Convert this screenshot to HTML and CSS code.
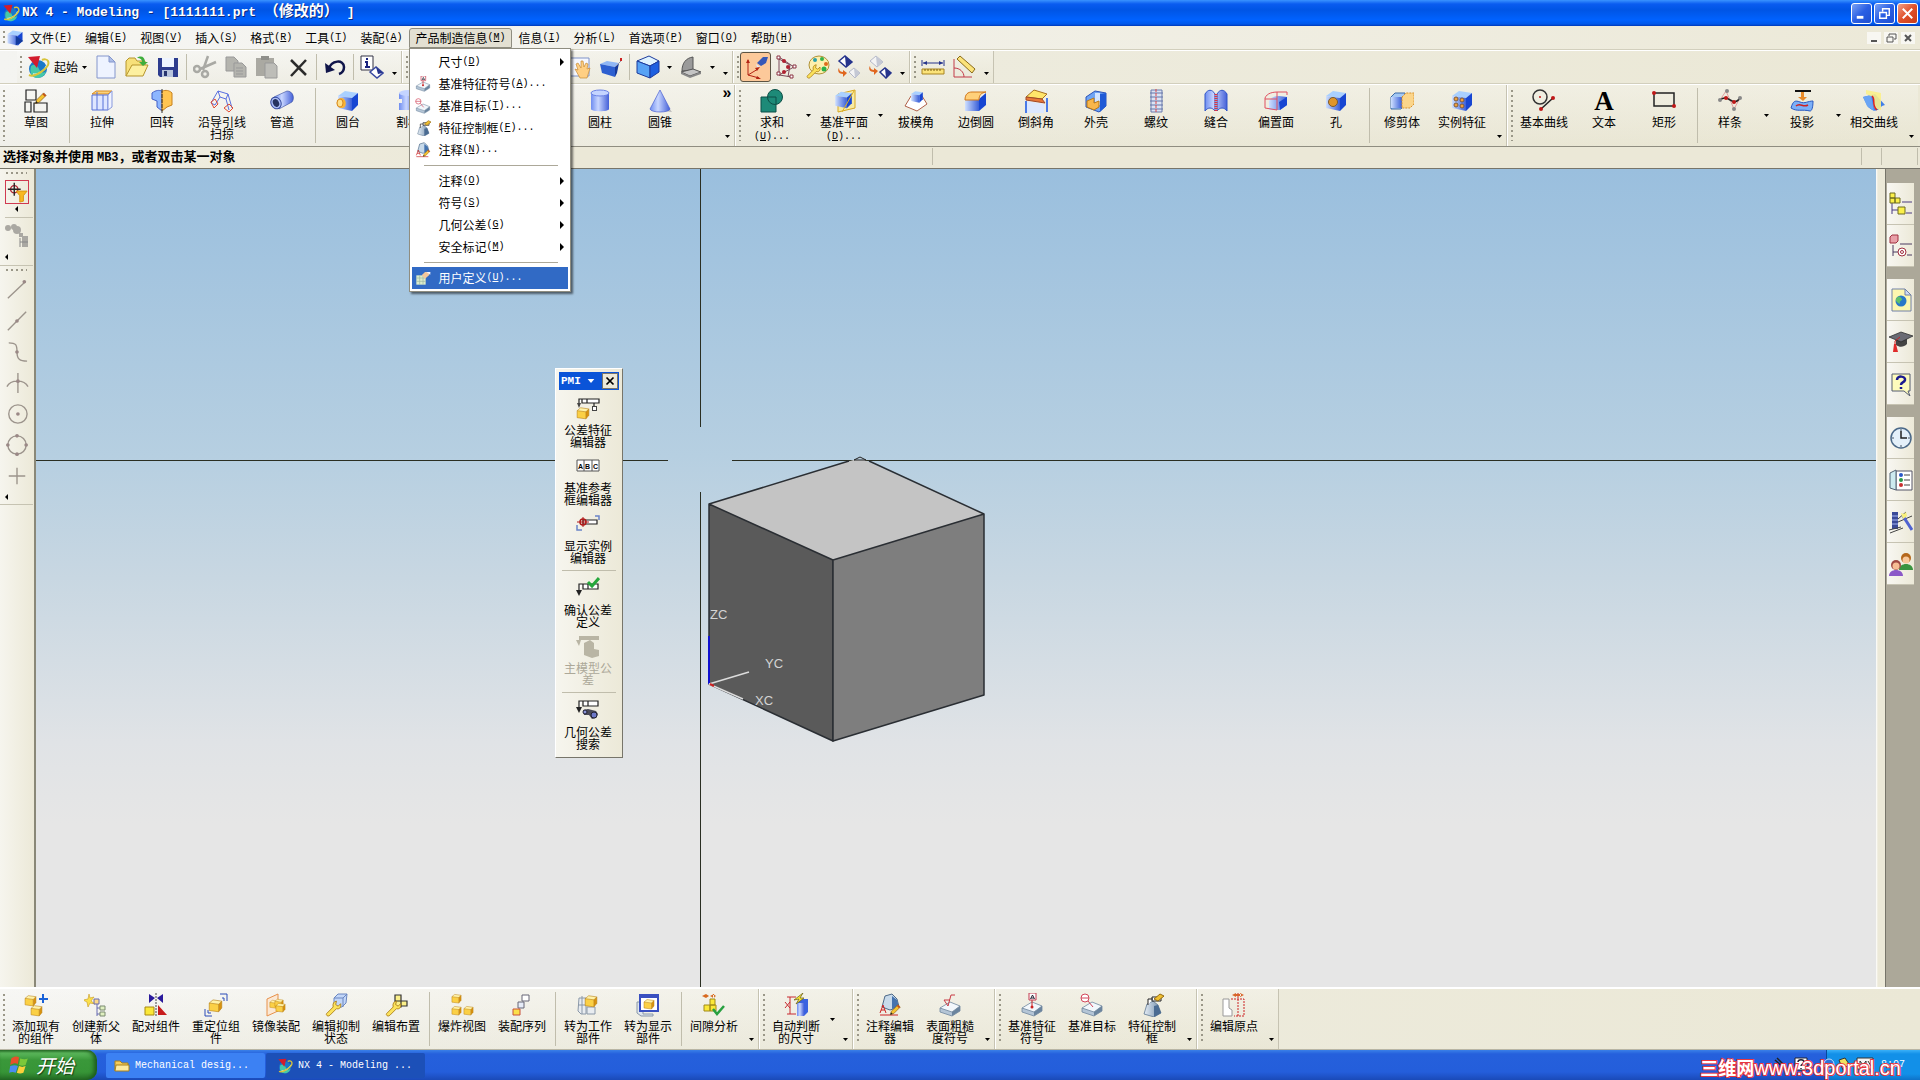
FILE: index.html
```
<!DOCTYPE html>
<html lang="zh-CN">
<head>
	<meta charset="utf-8">
	<title>NX 4 - Modeling</title>
	<link rel="stylesheet" href="styles.css">
</head>
<body>
<svg class="defs" width="0" height="0" aria-hidden="true">
	<defs>
		<linearGradient id="gb"><stop offset="0" stop-color="#cfe0ff"/><stop offset="1" stop-color="#3a5fd8"/></linearGradient>
		<linearGradient id="gc"><stop offset="0" stop-color="#6f8df0"/><stop offset=".4" stop-color="#c8d6ff"/><stop offset="1" stop-color="#4460d8"/></linearGradient>
		<linearGradient id="gg"><stop offset="0" stop-color="#e6eef6"/><stop offset="1" stop-color="#6d8aa8"/></linearGradient>
	</defs>
	<symbol id="cube-b" viewBox="0 0 24 24"><path d="M2 7l7-5 13 2-6 5z" fill="#a9d0ff"/><path d="M2 7l14 2v13L2 19z" fill="url(#gb)"/><path d="M16 9l6-5v12l-6 6z" fill="#1746d2"/></symbol>
	<symbol id="cube-y" viewBox="0 0 24 24"><path d="M2 8l6-5 14 2-5 5z" fill="#fff2a8"/><path d="M2 8l15 2v12L2 20z" fill="#fbd045"/><path d="M17 10l5-5v11l-5 6z" fill="#d8920f"/><path d="M2 8l6-5 14 2v11l-5 6L2 20zM2 8l15 2 5-5M17 10v12" fill="none" stroke="#b98012"/></symbol>
	<symbol id="slab" viewBox="0 0 24 24"><path d="M2 15l10-6 10 4-8 6z" fill="#f2f7fb"/><path d="M2 15l12 4v4L2 19z" fill="#b4c5d6"/><path d="M14 19l8-6v5l-8 5z" fill="#6a849e"/><path d="M2 15l10-6 10 4v5l-8 5-12-4zM2 15l12 4 8-6" fill="none" stroke="#6f879e" stroke-width=".8"/></symbol>
	<symbol id="weight" viewBox="0 0 24 24"><path d="M4 21L7 11l6-3 5 4 3 8-7 4z" fill="url(#gg)" stroke="#4d6a88" stroke-width=".7"/><path d="M14 13l4-1 3 8-7 4z" fill="#4a6b92"/></symbol>
	<symbol id="wrench" viewBox="0 0 24 24"><path d="M3 20l8-8c-1-4 1-7 4-7l-1 4 3 2 3-3c1 5-2 7-5 6l-8 8c-2 2-5 0-4-2z" fill="#fbe25c" stroke="#a87a10"/></symbol>
	<symbol id="pencil" viewBox="0 0 24 24"><path d="M4 20l2-6L17 3l4 4L10 18z" fill="#f5c431" stroke="#7a4d10"/><path d="M15 5l2-2 4 4-2 2z" fill="#c4501c"/><path d="M4 20l1-4 3 3z" fill="#222"/></symbol>
	<symbol id="nx" viewBox="0 0 24 24"><circle cx="12" cy="14" r="9" fill="#1a78c8"/><path d="M5 11c4-3 7 0 8 3s4 5 7 2c-1 5-5 7-9 7-5 0-8-5-6-12z" fill="#46c8a8"/><path d="M7 19c6 1 12-4 14-9" fill="none" stroke="#d6f4ff" stroke-width="1.500"/><path d="M3 20c6 3 22-8 19-14-1-2-4-2-6-1" fill="none" stroke="#d8c43a" stroke-width="2"/><path d="M2 2l12-1-3 12z" fill="#d21c2c"/></symbol>
	<symbol id="dim" viewBox="0 0 24 24"><path d="M3 14V7h19v5H7V7M12 7v5" fill="#fff" stroke="#222" stroke-width="1.200"/><path d="M0 13h6l-3 6z" fill="#222"/></symbol>
	<symbol id="people" viewBox="0 0 24 24"><circle cx="17" cy="6" r="5" fill="#b5671b"/><circle cx="17" cy="8" r="3.500" fill="#f8c89a"/><path d="M10 18c0-8 14-8 14 0z" fill="#3a9440"/><circle cx="7" cy="13" r="5" fill="#a04a42"/><circle cx="7" cy="14" r="3.500" fill="#f6bd93"/><path d="M0 24c0-8 14-8 14 0z" fill="#8b58c8"/></symbol>
	<symbol id="down" viewBox="0 0 5 3"><path d="M0 0h5L2.500 3z"/></symbol>
	<symbol id="right" viewBox="0 0 4 8"><path d="M0 0l4 4-4 4z"/></symbol>
	<symbol id="left" viewBox="0 0 3 6"><path d="M3 0L0 3l3 3z"/></symbol>
	<symbol id="i-datum" viewBox="0 0 24 24"><use href="#slab"/><path d="M12 7v6" stroke="#c22"/><circle cx="12" cy="14" r="1.500" fill="#c22"/><path d="M9 0h7v7H9z" fill="#fff" stroke="#c33a50"/><path d="M10.500 6l2-4 2 4M11 5h3" fill="none" stroke="#223"/></symbol>
	<symbol id="i-target" viewBox="0 0 24 24"><use href="#slab"/><circle cx="5" cy="5" r="4" fill="#fff" stroke="#d2465a"/><path d="M1 5h8M8 8l5 6" stroke="#d2465a"/></symbol>
	<symbol id="i-frame" viewBox="0 0 24 24"><use href="#weight"/><path d="M8 12V6h5M12 4h9v4h-9z" fill="#fff" stroke="#222"/><path d="M14 6l6-5 4 2-6 5z" fill="#f0c030" stroke="#946a10"/></symbol>
	<symbol id="i-note" viewBox="0 0 24 24"><path d="M4 14L7 3l7-2 5 5 2 8-9 3z" fill="#c8daea" stroke="#4d6a88"/><path d="M14 3l5 4 2 7-7 2z" fill="#4573ae"/><path d="M2 20l3-8 3 8M3 17h4M2 22h18" fill="none" stroke="#c22"/><use href="#pencil" x="10" y="10" width="14" height="14"/></symbol>
</svg>

<header class="titlebar">
	<svg class="ico16"><use href="#nx"/></svg>
	<h1>NX 4 - Modeling - [1111111.prt <span>（修改的）</span> ]</h1>
	<div class="winbtns">
		<button aria-label="最小化"><svg viewBox="0 0 20 20"><path d="M5 14h7" stroke="#fff" stroke-width="3"/></svg></button>
		<button aria-label="还原"><svg viewBox="0 0 20 20"><path d="M8 8V5h7v7h-3M5 9h7v6H5z" fill="none" stroke="#fff" stroke-width="1.500"/></svg></button>
		<button class="close" aria-label="关闭"><svg viewBox="0 0 20 20"><path d="M5 5l10 10M15 5L5 15" stroke="#fff" stroke-width="2"/></svg></button>
	</div>
</header>

<nav class="menubar">
	<span class="grip"></span>
	<svg class="ico16" viewBox="0 0 24 24"><use href="#cube-b"/><path d="M13 9l10 7-10 6z" fill="#123a9c"/></svg>
	<ul>
		<li><button>文件<small>(<u>F</u>)</small></button></li>
		<li><button>编辑<small>(<u>E</u>)</small></button></li>
		<li><button>视图<small>(<u>V</u>)</small></button></li>
		<li><button>插入<small>(<u>S</u>)</small></button></li>
		<li><button>格式<small>(<u>R</u>)</small></button></li>
		<li><button>工具<small>(<u>T</u>)</small></button></li>
		<li><button>装配<small>(<u>A</u>)</small></button></li>
		<li><button class="open">产品制造信息<small>(<u>M</u>)</small></button>
			<div class="menu">
				<button><i></i>尺寸<small>(<u>D</u>)</small><svg class="sub"><use href="#right"/></svg></button>
				<button><i><svg><use href="#i-datum"/></svg></i>基准特征符号<small>(<u>A</u>)...</small></button>
				<button><i><svg><use href="#i-target"/></svg></i>基准目标<small>(<u>T</u>)...</small></button>
				<button><i><svg><use href="#i-frame"/></svg></i>特征控制框<small>(<u>F</u>)...</small></button>
				<button><i><svg><use href="#i-note"/></svg></i>注释<small>(<u>N</u>)...</small></button>
				<hr>
				<button><i></i>注释<small>(<u>O</u>)</small><svg class="sub"><use href="#right"/></svg></button>
				<button><i></i>符号<small>(<u>S</u>)</small><svg class="sub"><use href="#right"/></svg></button>
				<button><i></i>几何公差<small>(<u>G</u>)</small><svg class="sub"><use href="#right"/></svg></button>
				<button><i></i>安全标记<small>(<u>M</u>)</small><svg class="sub"><use href="#right"/></svg></button>
				<hr>
				<button class="on"><i><svg viewBox="0 0 24 24"><path d="M2 8h14v14H2z" fill="#dceccb"/><path d="M2 12h14M2 17h14M7 8v14M12 8v14" stroke="#9ab5a0"/><path d="M10 8l5-5h8l-2 5-6 5z" fill="#f3c79c"/><path d="M17 3h6v4z" fill="#f4f4ff"/></svg></i>用户定义<small>(<u>U</u>)...</small></button>
			</div>
		</li>
		<li><button>信息<small>(<u>I</u>)</small></button></li>
		<li><button>分析<small>(<u>L</u>)</small></button></li>
		<li><button>首选项<small>(<u>P</u>)</small></button></li>
		<li><button>窗口<small>(<u>O</u>)</small></button></li>
		<li><button>帮助<small>(<u>H</u>)</small></button></li>
	</ul>
	<div class="mdibtns">
		<button aria-label="最小化"><svg viewBox="0 0 14 12"><path d="M4 9h6" stroke="#555" stroke-width="2"/></svg></button>
		<button aria-label="还原"><svg viewBox="0 0 14 12"><path d="M5 4V2h7v5h-2M3 5h6v5H3z" fill="none" stroke="#555"/></svg></button>
		<button aria-label="关闭"><svg viewBox="0 0 14 12"><path d="M4 3l6 6M10 3L4 9" stroke="#555" stroke-width="2"/></svg></button>
	</div>
</nav>

<div class="bar small">
	<div class="seg first">
		<span class="grip"></span>
		<button class="start-app"><svg class="ico"><use href="#nx"/></svg>起始<svg class="dn"><use href="#down"/></svg></button>
		<button class="tb" aria-label="新建"><svg class="ico" viewBox="0 0 24 24"><path d="M3 1h12l6 6v16H3z" fill="#eef3ff" stroke="#8496cc"/><path d="M15 1v6h6z" fill="#aebfe8" stroke="#8496cc"/></svg></button>
		<button class="tb" aria-label="打开"><svg class="ico" viewBox="0 0 24 24"><path d="M1 21V6l3-3h6l2 3h8v4" fill="#f7e07a" stroke="#b6952c"/><path d="M1 21l6-11h16l-5 11z" fill="#fdf0a0" stroke="#b6952c"/><path d="M12 3c4-3 8-1 8 4h3l-5 4-4-4h3c0-3-2-4-5-4z" fill="#3fae3c"/></svg></button>
		<button class="tb" aria-label="保存"><svg class="ico" viewBox="0 0 24 24"><path d="M2 3h20v19H4l-2-2z" fill="#2d3c8e"/><path d="M6 3h12v9H6z" fill="#eef4ff"/><path d="M6 15h11v7H6z" fill="#b8c4dc"/><path d="M8 16h3v5H8z" fill="#27346e"/></svg></button>
		<span class="sep"></span>
		<button class="tb" aria-label="剪切" disabled><svg class="ico" viewBox="0 0 24 24" fill="none" stroke="#a9a9a4" stroke-width="2.500"><path d="M15 1l-5 14M23 7L7 14"/><circle cx="4" cy="14" r="3"/><circle cx="12" cy="19" r="3"/></svg></button>
		<button class="tb" aria-label="复制" disabled><svg class="ico" viewBox="0 0 24 24" fill="#b4b4ae" stroke="#999"><path d="M2 2h8l4 4v10H2z"/><path d="M10 8h8l4 4v10H10z"/><path d="M12 13h7M12 16h7M12 19h7"/></svg></button>
		<button class="tb" aria-label="粘贴" disabled><svg class="ico" viewBox="0 0 24 24" fill="#aaa9a2"><path d="M1 3h18v18H1z"/><path d="M6 1h8v4H6z" fill="#8f8f8a"/><path d="M10 8h9l3 3v12H10z" fill="#bdbdb8" stroke="#999"/></svg></button>
		<button class="tb" aria-label="删除"><svg class="ico" viewBox="0 0 24 24"><path d="M5 5l15 15M20 5L5 21" stroke="#2b2b2b" stroke-width="2.500"/></svg></button>
		<span class="sep"></span>
		<button class="tb" aria-label="撤消"><svg class="ico" viewBox="0 0 24 24"><path d="M6 14C8 5 21 4 21 12c0 4-2 6-5 7" fill="none" stroke="#10154a" stroke-width="2.500"/><path d="M2 8l1 10 9-3z" fill="#10154a"/></svg></button>
		<span class="sep"></span>
		<button class="tb" aria-label="信息"><svg class="ico" viewBox="0 0 24 24"><path d="M1 1h12v14H1z" fill="#fff" stroke="#334"/><path d="M7 3v2M5 7h2v5M5 12h5" fill="none" stroke="#1a237e" stroke-width="2"/><path d="M10 17l6-5 7 6-6 5z" fill="#fff" stroke="#3848a0" stroke-width="1.500"/><path d="M16 12l2 7 5-1z" fill="#26348c"/></svg></button>
		<button class="more" aria-label="更多"><svg class="dn"><use href="#down"/></svg></button>
	</div>
	<div class="seg">
		<span class="grip"></span><span class="gap"></span>
		<button class="tb" aria-label="平移"><svg class="ico" viewBox="0 0 24 24"><path d="M1 3h20v18H1z" fill="#f6f8ff" stroke="#7f92c8"/><path d="M7 14l3 1-2-6 2-1 3 5V6h2l1 6 2-4 2 1-1 5 3-1-3 10h-7z" fill="#ffcf83" stroke="#c58a35" stroke-width=".7"/></svg></button>
		<button class="tb" aria-label="视图"><svg class="ico" viewBox="0 0 24 24"><path d="M1 9l7-3 12 2-4 4z" fill="#8fb6f5"/><path d="M1 9l15 3v10L3 18z" fill="#2d5fd0"/><path d="M16 12l4-4-2 10-2 4z" fill="#163a9c"/><path d="M17 11l5-5" stroke="#99a"/><path d="M21 3h2v3h-2z" fill="#c22"/></svg></button>
		<span class="sep"></span>
		<button class="tb" aria-label="着色"><svg class="ico" viewBox="0 0 24 24" stroke="#1c3a9c"><path d="M1 6l12-5 10 5-9 5z" fill="#dff3ff"/><path d="M1 6l13 5v12L1 18z" fill="#57a2f5"/><path d="M14 11l9-5v11l-9 6z" fill="#1d5fe0"/></svg></button>
		<button class="drop" aria-label="着色选项"><svg class="dn"><use href="#down"/></svg></button>
		<button class="tb" aria-label="方位"><svg class="ico" viewBox="0 0 24 24"><path d="M3 16C3 8 7 3 14 2v13z" fill="#9a9a9a" stroke="#555"/><path d="M2 17l12-3 8 3-11 4z" fill="#c4c4c4" stroke="#555"/><path d="M2 17v2l9 4 11-4v-2l-11 4z" fill="#888"/></svg></button>
		<button class="drop" aria-label="方位选项"><svg class="dn"><use href="#down"/></svg></button>
		<button class="more" aria-label="更多"><svg class="dn"><use href="#down"/></svg></button>
	</div>
	<div class="seg">
		<span class="grip"></span>
		<button class="tb on" aria-label="动态坐标"><svg class="ico" viewBox="0 0 24 24"><path d="M4 5v15l11 3M4 20l10-6" fill="none" stroke="#b32414"/><path d="M2 8l2-4 2 4zM11 13l5-1-3 4zM13 21l4 3-5 0z" fill="#b32414"/><path d="M13 8l6-6h5l-2 6-5 3z" fill="#3658b8"/><path d="M12 9l4 3-3 0z" fill="#dfe8ff"/></svg></button>
		<button class="tb" aria-label="坐标原点"><svg class="ico" viewBox="0 0 24 24"><path d="M4 2v18l13 2M4 2l15 10M4 20l15-8M4 4l11 6-2 12" fill="none" stroke="#7a4a5a"/><g fill="#fff" stroke="#8a3040"><path d="M2 1h3v3H2zM2 17h3v3H2zM18 10h3v3h-3zM15 20h3v3h-3z"/></g><g fill="#b02030"><circle cx="9" cy="6" r="2"/><circle cx="9" cy="17" r="2"/><circle cx="13" cy="12" r="2"/></g></svg></button>
		<button class="tb" aria-label="对象显示"><svg class="ico" viewBox="0 0 24 24"><ellipse cx="13" cy="10" rx="10" ry="9" fill="#fdf0ae" stroke="#b09236"/><circle cx="9" cy="5" r="2" fill="#2aa0a8"/><circle cx="16" cy="4" r="2" fill="#36b24a"/><circle cx="20" cy="9" r="2" fill="#e06a1c"/><circle cx="18" cy="14" r="2.500" fill="#2ab04a"/><use href="#wrench" x="-1" y="6" width="18" height="18"/></svg></button>
		<button class="tb" aria-label="隐藏"><svg class="ico" viewBox="0 0 24 24"><path d="M2 6l6-5 7 6-6 5z" fill="#fff" stroke="#26348c" stroke-width="1.500"/><path d="M8 1l1 11 6-5z" fill="#26348c"/><path d="M12 17l5-4 6 5-5 5z" fill="#f4f4f4" stroke="#b4b8c8"/><path d="M17 13l1 10 5-5z" fill="#c4c8d4"/><path d="M2 13c0 3 2 4 4 4v-2l4 3-4 4v-3c-4 0-6-3-4-6z" fill="#e0661e"/></svg></button>
		<button class="tb" aria-label="反隐藏"><svg class="ico" viewBox="0 0 24 24"><path d="M2 6l6-5 7 6-6 5z" fill="#f4f4f4" stroke="#b4b8c8"/><path d="M8 1l1 11 6-5z" fill="#c4c8d4"/><path d="M12 17l5-4 6 5-5 5z" fill="#fff" stroke="#26348c" stroke-width="1.500"/><path d="M17 13l1 10 5-5z" fill="#26348c"/><path d="M2 11c0 3 2 4 4 4v-2l4 3-4 4v-3c-4 0-6-3-4-6z" fill="#e0661e"/></svg></button>
		<button class="more" aria-label="更多"><svg class="dn"><use href="#down"/></svg></button>
	</div>
	<div class="seg">
		<span class="grip"></span>
		<button class="tb" aria-label="距离"><svg class="ico" viewBox="0 0 24 24"><path d="M1 5v6M23 5v6M2 8h20" stroke="#26348c"/><path d="M2 8l4-2v4zM22 8l-4-2v4z" fill="#26348c"/><path d="M1 14h22v5H1z" fill="#fbe37a" stroke="#a88420"/><path d="M4 14v2M7 14v2M10 14v2M13 14v2M16 14v2M19 14v2" stroke="#7a5c10"/></svg></button>
		<button class="tb" aria-label="角度"><svg class="ico" viewBox="0 0 24 24"><path d="M2 4v18h18M2 13c6 0 10 4 10 9" fill="none" stroke="#c23a48"/><path d="M5 4l3-3 15 13-3 4z" fill="#fbe37a" stroke="#8a6a18"/></svg></button>
		<button class="more" aria-label="更多"><svg class="dn"><use href="#down"/></svg></button>
	</div>
</div>

<div class="bar">
	<div class="seg">
		<span class="grip"></span>
		<button class="tool"><svg class="ico" viewBox="0 0 24 24"><path d="M2 1h10v10H2zM1 13h6v10H1zM10 14h13v9H10z" fill="none" stroke="#222" stroke-width="1.200"/><use href="#pencil" x="9" y="2" width="15" height="15"/></svg><span>草图</span></button>
		<span class="sep"></span>
		<button class="tool"><svg class="ico" viewBox="0 0 24 24"><path d="M2 5l4-3h16l-4 3z" fill="#fbd27c" stroke="#d88a20"/><path d="M2 6h16v15H2z" fill="#dfe6ff" stroke="#5670d8"/><path d="M18 6l4-4v16l-4 3z" fill="#f0f3ff" stroke="#8899dd"/><path d="M7 3v18M13 6v15" stroke="#5670d8"/></svg><span>拉伸</span></button>
		<button class="tool"><svg class="ico" viewBox="0 0 24 24"><path d="M2 4c4-3 7-3 10-2v20l-5-4v-6L2 10z" fill="#8db6ff" stroke="#4460c8"/><path d="M12 2c4-1 7-1 10 2v12l-5 2-5 4z" fill="#ffc552" stroke="#c8811c"/><path d="M12 0v24" stroke="#333" stroke-dasharray="4 1"/></svg><span>回转</span></button>
		<button class="tool"><svg class="ico" viewBox="0 0 24 24" fill="none"><path d="M1 14L8 2l10 3 4 14M5 16l5-8 6 2 3 11M1 14l4 2M8 2l2 6M18 5l-2 5" stroke="#5a6fe0"/><path d="M1 13l4-3 3 5-4 4zM14 19l5-4 4 4-4 4z" stroke="#e04a30"/></svg><span>沿导引线扫掠</span></button>
		<button class="tool"><svg class="ico" viewBox="0 0 24 24"><path d="M4 8L17 2c6 0 8 7 5 11L9 20z" fill="url(#gc)" stroke="#33489c" stroke-width=".6"/><ellipse cx="6" cy="14" rx="5" ry="6" fill="#a9bbf4" stroke="#33489c" transform="rotate(-25 6 14)"/><ellipse cx="6" cy="14" rx="3" ry="4" fill="#26335f" transform="rotate(-25 6 14)"/></svg><span>管道</span></button>
		<span class="sep"></span>
		<button class="tool"><svg class="ico" viewBox="0 0 24 24"><use href="#cube-b"/><path d="M6 9c-6-1-8 11 0 10 5 0 5-9 0-10z" fill="#f9b233"/><ellipse cx="4" cy="14" rx="3" ry="4" fill="#ffe08a" stroke="#d88a20"/></svg><span>圆台</span></button>
		<button class="tool"><svg class="ico" viewBox="0 0 24 24"><path d="M3 4h18v6H3zM6 10h12v4H6zM3 14h18v7H3z" fill="url(#gc)"/><ellipse cx="12" cy="4" rx="9" ry="3" fill="#c4d4ff"/></svg><span>割槽</span></button>
		<span class="gap hid"></span>
		<button class="tool"><svg class="ico" viewBox="0 0 24 24"><path d="M3 4v16c0 3 18 3 18 0V4z" fill="url(#gc)"/><ellipse cx="12" cy="4" rx="9" ry="3" fill="#c4d4ff" stroke="#6b82e4"/></svg><span>圆柱</span></button>
		<button class="tool"><svg class="ico" viewBox="0 0 24 24"><path d="M16 22l8 1-9-12z" fill="#bbb"/><path d="M12 1L2 20c1 4 19 4 20 0z" fill="url(#gc)" stroke="#4a60d0" stroke-width=".7"/></svg><span>圆锥</span></button>
		<span class="gap end"></span>
		<button class="more" aria-label="更多"><b>»</b><svg class="dn"><use href="#down"/></svg></button>
	</div>
	<div class="seg">
		<span class="grip"></span>
		<button class="tool"><svg class="ico" viewBox="0 0 24 24" fill="#1d8a78" stroke="#0d4f46"><path d="M1 8h15v15H1z"/><circle cx="15" cy="8" r="7.500"/><path d="M8 8h8v7" fill="none"/></svg><span>求和<small>(<u>U</u>)...</small></span></button>
		<button class="drop" aria-label="布尔选项"><svg class="dn"><use href="#down"/></svg></button>
		<button class="tool"><svg class="ico" viewBox="0 0 24 24"><path d="M6 23V5l17-4v18z" fill="#fbe87a" fill-opacity=".6" stroke="#d8a820"/><use href="#cube-b" x="1" y="1" width="21" height="20"/><path d="M10 23L22 2" stroke="#e0b020"/></svg><span>基准平面<small>(<u>D</u>)...</small></span></button>
		<button class="drop" aria-label="基准选项"><svg class="dn"><use href="#down"/></svg></button>
		<button class="tool"><svg class="ico" viewBox="0 0 24 24"><path d="M7 7L1 17l12 5 10-7-5-8" fill="#fff" stroke="#b06048"/><use href="#cube-b" x="6" y="1" width="14" height="14"/></svg><span>拔模角</span></button>
		<button class="tool"><svg class="ico" viewBox="0 0 24 24"><path d="M1 10h14v12H1z" fill="url(#gb)"/><path d="M15 10l7-6v12l-7 6z" fill="#1746d2"/><path d="M1 11c0-6 3-8 7-8h14c-5 1-7 3-7 8z" fill="#ffd07a" stroke="#d0761a"/></svg><span>边倒圆</span></button>
		<button class="tool"><svg class="ico" viewBox="0 0 24 24"><path d="M2 12l18 3v9H2z" fill="#dce8ff"/><path d="M2 12v12M23 9v14" stroke="#4a7ae8" stroke-width="2"/><path d="M2 8l8-7 13 4-5 5z" fill="#ffe56a" stroke="#a87020"/><path d="M2 8l16 2 3 4L2 11z" fill="#e87838" stroke="#a04828"/></svg><span>倒斜角</span></button>
		<button class="tool"><svg class="ico" viewBox="0 0 24 24"><path d="M2 8l9-6 11 2v13l-7 6-13-5z" fill="#6fa4f4" stroke="#2a52b8"/><path d="M11 4h5v12h-5z" fill="#d2e4ff"/><path d="M16 5l6-1v13l-6 6z" fill="#1f5ad6"/><path d="M3 12l7-3v5l5-2v6l-5 3-7-3z" fill="#f9b64a" stroke="#b87818"/></svg><span>外壳</span></button>
		<button class="tool"><svg class="ico" viewBox="0 0 24 24"><path d="M7 1h11v22H7z" fill="#dbe3f4" stroke="#6a7cae"/><path d="M6 4h13M6 8h13M6 12h13M6 16h13M6 20h13" stroke="#6474a8"/><path d="M12 0v24" stroke="#d44" stroke-dasharray="3 1"/></svg><span>螺纹</span></button>
		<button class="tool"><svg class="ico" viewBox="0 0 24 24"><path d="M1 5c3-5 7-5 10 0v17c-3-4-7-4-10 0zM13 5c3-5 7-5 10 0v17c-3-4-7-4-10 0z" fill="url(#gc)" stroke="#3156c8"/><path d="M12 5v17" stroke="#d34" stroke-width="3" stroke-dasharray="1 1"/></svg><span>缝合</span></button>
		<button class="tool"><svg class="ico" viewBox="0 0 24 24"><path d="M5 12c2-4 6-5 10-5l8 1v8l-7 5H5z" fill="url(#gb)"/><path d="M15 13l8-5v8l-7 5z" fill="#1746d2"/><path d="M1 19V9c2-5 8-6 13-6h9v3M1 19l12 2V3M1 10h12" fill="none" stroke="#e05060"/></svg><span>偏置面</span></button>
		<button class="tool"><svg class="ico" viewBox="0 0 24 24"><use href="#cube-b"/><circle cx="9" cy="13" r="4.500" fill="#e0962a" stroke="#7a5a30"/></svg><span>孔</span></button>
		<span class="sep"></span>
		<button class="tool"><svg class="ico" viewBox="0 0 24 24"><path d="M1 8l4-4h10v11l-4 5H1z" fill="#a4c8f4" stroke="#3a6aa8"/><path d="M1 8h11v11H1z" fill="url(#gb)"/><path d="M12 8l4-4h8v11l-4 4h-8z" fill="#fbd58a" stroke="#d8902a" stroke-dasharray="2 1"/></svg><span>修剪体</span></button>
		<button class="tool"><svg class="ico" viewBox="0 0 24 24"><use href="#cube-b"/><g fill="#f0a03a" stroke="#7a5a40"><circle cx="6" cy="10" r="2"/><circle cx="12" cy="11" r="2"/><circle cx="6" cy="16" r="2"/><circle cx="12" cy="17" r="2"/></g></svg><span>实例特征</span></button>
		<button class="more" aria-label="更多"><svg class="dn"><use href="#down"/></svg></button>
	</div>
	<div class="seg last">
		<span class="grip"></span>
		<button class="tool"><svg class="ico" viewBox="0 0 24 24"><circle cx="8" cy="8" r="7" fill="none" stroke="#333" stroke-width="1.500"/><path d="M9 20L21 9" stroke="#222" stroke-width="1.500"/><g fill="#c01818"><circle cx="8" cy="8" r="1"/><circle cx="9" cy="20" r="2"/><circle cx="21" cy="9" r="2"/></g></svg><span>基本曲线</span></button>
		<button class="tool"><b class="ico big-a" aria-hidden="true">A</b><span>文本</span></button>
		<button class="tool"><svg class="ico" viewBox="0 0 24 24"><path d="M2 4h20v13H2z" fill="none" stroke="#222" stroke-width="1.500"/><g fill="#c01818"><circle cx="2" cy="4" r="2"/><circle cx="22" cy="17" r="2"/></g></svg><span>矩形</span></button>
		<span class="sep"></span>
		<button class="tool"><svg class="ico" viewBox="0 0 24 24"><path d="M2 11l6-9 8 18 6-11" fill="none" stroke="#e0a0a0"/><path d="M2 11c5-4 8-1 12 1s6 0 8-3" fill="none" stroke="#222" stroke-width="1.500"/><g fill="#888"><circle cx="2" cy="11" r="2"/><circle cx="9" cy="2" r="2"/><circle cx="16" cy="20" r="2"/><circle cx="22" cy="9" r="2"/></g><g fill="#c01818"><circle cx="8" cy="9" r="2"/><circle cx="16" cy="13" r="2"/></g></svg><span>样条</span></button>
		<button class="drop" aria-label="样条选项"><svg class="dn"><use href="#down"/></svg></button>
		<button class="tool"><svg class="ico" viewBox="0 0 24 24"><path d="M5 1h16v2H5z" fill="#111"/><path d="M11 3h3v5h3l-4 4-5-4h3z" fill="#e88a28"/><path d="M1 19c2-7 4-8 9-6s8-1 13-1c0 6-1 10-3 10-8-2-13 1-19-3z" fill="#7cb0f8" stroke="#2a5ac0"/><path d="M6 17c4-4 7 2 12-1" fill="none" stroke="#c22" stroke-width="1.500"/></svg><span>投影</span></button>
		<button class="drop" aria-label="投影选项"><svg class="dn"><use href="#down"/></svg></button>
		<button class="tool"><svg class="ico" viewBox="0 0 24 24"><path d="M1 8l12-3 10 11-3 1c-5 6-8 6-14 1z" fill="#3f7ee8"/><path d="M1 8l8-2 3 16-7-5z" fill="#6aa4f4"/><path d="M4 1l15 3v17l-7-2-1-11-7-3z" fill="#fbf08a" fill-opacity=".9"/><path d="M10 7c4 3-1 9 5 14" fill="none" stroke="#d22" stroke-width="1.500"/></svg><span>相交曲线</span></button>
		<button class="more" aria-label="更多"><svg class="dn"><use href="#down"/></svg></button>
	</div>
</div>

<div class="cue">
	<p>选择对象并使用 <span>MB3</span>，或者双击某一对象</p>
	<p></p><p class="tiny"></p><p class="tiny2"></p>
</div>

<main>
	<aside class="snap">
		<div class="group">
			<span class="hgrip"></span>
			<button class="filter" aria-label="选择过滤器"><svg viewBox="0 0 24 24"><circle cx="9" cy="9" r="4" fill="none" stroke="#b02030" stroke-width="1.500"/><path d="M9 2v14M2 9h14" stroke="#222" stroke-width="1.500"/><path d="M11 11h12l-4 5v6l-4 1v-7z" fill="#f8b822" stroke="#d89410"/></svg></button>
			<svg class="lf mid"><use href="#left"/></svg>
			<hr>
			<button aria-label="选择意图" disabled><svg viewBox="0 0 24 24" fill="#aaa8a2"><circle cx="3" cy="4" r="3"/><circle cx="9" cy="3" r="3"/><circle cx="12" cy="6" r="4"/><path d="M14 9h4v4h-4zM17 12h6v11h-6z"/><path d="M15 14v9M15 18h8" stroke="#888" fill="none"/></svg></button>
			<svg class="lf"><use href="#left"/></svg>
		</div>
		<div class="group points">
			<span class="hgrip"></span>
			<button aria-label="端点" disabled><svg viewBox="0 0 24 24"><path d="M2 21L21 3"/><circle class="dot" cx="20" cy="3" r="2"/></svg></button>
			<button aria-label="中点" disabled><svg viewBox="0 0 24 24"><path d="M2 22L22 2"/><circle class="dot" cx="12" cy="12" r="2"/></svg></button>
			<button aria-label="控制点" disabled><svg viewBox="0 0 24 24"><path d="M3 2c8 0 9 2 9 10s3 10 11 10"/><circle class="dot" cx="12" cy="12" r="2"/></svg></button>
			<button aria-label="交点" disabled><svg viewBox="0 0 24 24"><path d="M13 1v22M1 16c4-8 19-8 23 0"/><circle class="dot" cx="13" cy="10" r="2"/></svg></button>
			<button aria-label="圆心" disabled><svg viewBox="0 0 24 24"><circle cx="13" cy="12" r="10"/><circle class="dot" cx="13" cy="12" r="2"/></svg></button>
			<button aria-label="象限点" disabled><svg viewBox="0 0 24 24"><circle cx="12" cy="12" r="10"/><circle class="dot" cx="12" cy="2" r="2"/><circle class="dot" cx="12" cy="22" r="2"/><circle class="dot" cx="2" cy="12" r="2"/><circle class="dot" cx="22" cy="12" r="2"/></svg></button>
			<button aria-label="存在点" disabled><svg viewBox="0 0 24 24"><path d="M12 3v18M3 12h18"/></svg></button>
			<svg class="lf"><use href="#left"/></svg>
		</div>
	</aside>

	<section class="view">
		<svg class="scene">
			<!-- crosshair -->
			<g stroke="#2a2e22" shape-rendering="crispEdges">
				<path d="M664 0v258M664 323v664"/>
				<line x1="0" y1="291.500" x2="632" y2="291.500"/><line x1="696" y1="291.500" x2="100%" y2="291.500"/>
			</g>
			<!-- block -->
			<path d="M673 335l151-46 124 56-151 46z" fill="#c4c4c4"/>
			<g stroke="#2a2e33" stroke-width="1.500" stroke-linejoin="round">
				<path d="M673 335l140-43M833 292l115 53" fill="none"/>
				<path d="M673 335l124 56v181l-124-57z" fill="#5a5a5a"/>
				<path d="M797 391l151-46v181l-151 46z" fill="#7e7e7e"/>
			</g>
			<path d="M818 291l6-3 6 3z" fill="#b9cfe0" stroke="#222"/>
			<!-- work axes -->
			<path d="M673 515v-48" stroke="#1010d0" stroke-width="2"/>
			<path d="M673 515l40-12M673 515l34 15" stroke="#dcdcdc" stroke-width="1.500"/>
			<path d="M674 515l4 2" stroke="#c22" stroke-width="2"/>
			<text x="674" y="450">ZC</text><text x="729" y="499">YC</text><text x="719" y="536">XC</text>
		</svg>

		<div class="palette">
			<div class="ptitle"><span>PMI</span><svg class="dn"><use href="#down"/></svg><button aria-label="关闭"><svg viewBox="0 0 16 16"><path d="M4 4l8 8M12 4l-8 8" stroke="#000" stroke-width="2"/></svg></button></div>
			<button class="tool"><svg class="ico" viewBox="0 0 24 24"><path d="M3 9V3h20v4H6V3M11 3v4M18 7v4" fill="#fff" stroke="#222" stroke-width="1.200"/><path d="M1 7h4l-2 5zM16 10h5v5h-5z" fill="#444"/><path d="M17 11h3v3h-3z" fill="#fff"/><use href="#cube-y" x="0" y="10" width="14" height="14"/></svg><span>公差特征编辑器</span></button>
			<button class="tool"><svg class="ico" viewBox="0 0 24 24"><path d="M1 6h22v11H1zM8 6v11M16 6v11" fill="#fff" stroke="#555"/><g class="abc"><text x="2" y="15">A</text><text x="9" y="15">B</text><text x="17" y="15">C</text></g></svg><span>基准参考框编辑器</span></button>
			<button class="tool"><svg class="ico" viewBox="0 0 24 24"><path d="M7 8h14v4H7z" fill="#fff" stroke="#222" stroke-width="1.200"/><circle cx="7" cy="10" r="3" fill="none" stroke="#b01818" stroke-width="1.500"/><path d="M7 5v10M1 10h12" stroke="#b01818"/><path d="M19 4h4v4M1 13v5h5" fill="none" stroke="#6a84c8" stroke-width="1.500"/></svg><span>显示实例编辑器</span></button>
			<hr>
			<button class="tool"><svg class="ico" viewBox="0 0 24 24"><use href="#dim" y="1"/><path d="M12 6l4 4 7-8" fill="none" stroke="#25a83c" stroke-width="3"/></svg><span>确认公差定义</span></button>
			<button class="tool" disabled><svg class="ico" viewBox="0 0 24 24" fill="#b9b5a4"><path d="M3 2h20v4H3z"/><path d="M0 6h5l-2 6zM8 9l6-3 4 3v6l5 1v6l-7 2-8-3z"/></svg><span>主模型公差</span></button>
			<hr>
			<button class="tool"><svg class="ico" viewBox="0 0 24 24"><use href="#dim" y="-4"/><path d="M7 12l5-1 8 2 2 3-2 4-4 1-3-4-5 0z" fill="#4a4a58"/><circle cx="18" cy="17" r="3" fill="#6d78c8" stroke="#223"/><circle cx="9" cy="14" r="2" fill="#8a94d8" stroke="#223"/></svg><span>几何公差搜索</span></button>
		</div>
	</section>

	<aside class="resource">
		<div>
			<button aria-label="装配导航器"><svg viewBox="0 0 24 24"><path d="M3 11v11M3 18h6M13 10h10M17 21h6" stroke="#4a3a80"/><g fill="#fbf04a" stroke="#6d6a20"><path d="M1 1h5v5H1zM1 6h5v5H1zM6 6h5v5H6zM9 15h7v7H9z"/></g></svg></button>
			<button aria-label="部件导航器"><svg viewBox="0 0 24 24"><path d="M4 11v11M4 18h5M11 10h12M18 21h5" stroke="#4a3a60"/><path d="M1 3l2-2h6v6l-2 2H1z" fill="#e8a0a8" stroke="#a03040"/><circle cx="13" cy="18" r="4" fill="#fff" stroke="#a03040"/><circle cx="13" cy="18" r="1.500" fill="none" stroke="#a03040"/></svg></button>
		</div>
		<div>
			<button aria-label="Internet"><svg viewBox="0 0 24 24"><path d="M3 1h13l6 6v16H3z" fill="#fdf7b0" stroke="#7080a8"/><path d="M16 1v6h6z" fill="#cfdcf4" stroke="#7080a8"/><circle cx="12" cy="13" r="5.500" fill="#2a78c8"/><path d="M7 11c3-5 5-1 6 0s-3 2-2 4-5-1-4-4z" fill="#5fc06a"/></svg></button>
			<button aria-label="培训"><svg viewBox="0 0 24 24"><path d="M7 10v5c4 3 8 2 11-1V9z" fill="#444"/><path d="M0 7l12-5 12 4-12 6z" fill="#6a6b74" stroke="#222" stroke-width=".7"/><path d="M11 7l-5 4v4" fill="none" stroke="#c22"/><path d="M5 14h2l2 8H4z" fill="#e02a2a"/></svg></button>
			<button aria-label="帮助"><svg viewBox="0 0 24 24"><path d="M3 2h18v17h-2l2 5-6-5H3z" fill="#fdfbbc" stroke="#555c70"/><path d="M8 8c0-5 9-4 8 0-1 3-4 2-4 5M12 15v2" fill="none" stroke="#1a1a90" stroke-width="2.500"/></svg></button>
		</div>
		<div>
			<button aria-label="历史"><svg viewBox="0 0 24 24"><circle cx="12" cy="12" r="10" fill="#e4f0fa" stroke="#4a6888" stroke-width="1.500"/><path d="M12 5v7h6" fill="none" stroke="#222" stroke-width="1.500"/><path d="M12 3v2M12 19v2M3 12h2M19 12h2" stroke="#456"/></svg></button>
			<button aria-label="系统材料"><svg viewBox="0 0 24 24"><path d="M7 3h16v19H7z" fill="#fff" stroke="#556"/><path d="M1 5l6-3v20l-6-2z" fill="#cdebf0" stroke="#567"/><path d="M15 7h6M15 12h6M15 17h6" stroke="#444"/><circle cx="12" cy="7" r="2" fill="#2a58c8"/><circle cx="12" cy="12" r="2" fill="#2a9a4a"/><circle cx="12" cy="17" r="2" fill="#c83030"/></svg></button>
			<button aria-label="加工向导"><svg viewBox="0 0 24 24"><path d="M3 2h6v17H3z" fill="#3a4a98"/><path d="M3 6h6M3 10h6M3 14h6" stroke="#a4b4f4"/><path d="M0 20l12-3M1 23l13-5M9 12l14-6M9 9l8-7" stroke="#444"/><path d="M14 6l9 14" stroke="#4f62d0" stroke-width="3"/><path d="M12 3l3 1 2-2 1 4-4 3z" fill="#f8f07a"/></svg></button>
			<button aria-label="角色"><svg><use href="#people"/></svg></button>
		</div>
	</aside>
</main>

<div class="bar bottom">
	<div class="seg">
		<span class="grip"></span>
		<button class="tool"><svg class="ico" viewBox="0 0 24 24"><use href="#cube-y" x="0" y="1" width="13" height="13"/><use href="#cube-y" x="6" y="11" width="13" height="13"/><path d="M19 1v9M15 6h9" stroke="#1a62d8" stroke-width="2"/></svg><span>添加现有的组件</span></button>
		<button class="tool"><svg class="ico" viewBox="0 0 24 24"><path d="M5 1l1 4 4-1-3 4 4 3-5-1-2 4-1-5-4-2 5-1z" fill="#fbe04a" stroke="#c89a20" stroke-width=".6"/><path d="M10 6h5v5h-5zM13 11v12M13 15h3M13 21h3" fill="#fbd98a" stroke="#666ab0"/><path d="M16 13h5v4h-5zM16 19h5v4h-5z" fill="#e0f0c0" stroke="#7a8a70"/></svg><span>创建新父体</span></button>
		<button class="tool"><svg class="ico" viewBox="0 0 24 24"><path d="M5 1l6 4-6 5zM19 1l-6 4 6 5z" fill="#2a1a9c"/><path d="M12 0v24" stroke="#444" stroke-dasharray="2 1"/><path d="M1 14h9v8H1z" fill="#fbe838" stroke="#a88a10"/><path d="M14 12l9 10h-9z" fill="#c81c1c"/></svg><span>配对组件</span></button>
		<button class="tool"><svg class="ico" viewBox="0 0 24 24"><use href="#cube-y" x="4" y="5" width="15" height="15"/><path d="M16 1h7v7M18 5h2v3M1 16v7h7M4 17v3h3" fill="none" stroke="#2a4ab8"/></svg><span>重定位组件</span></button>
		<button class="tool"><svg class="ico" viewBox="0 0 24 24"><path d="M3 6l11-5v17L3 23z" fill="#fbe8d4" stroke="#e8904a"/><use href="#cube-y" x="5" y="6" width="10" height="10"/><use href="#cube-y" x="10" y="5" width="10" height="10"/><use href="#cube-y" x="11" y="9" width="11" height="11"/></svg><span>镜像装配</span></button>
		<button class="tool"><svg class="ico" viewBox="0 0 24 24"><path d="M10 5l4-4h9l-1 9-4 4h-8z" fill="#c2d6f8" stroke="#6a86c0"/><path d="M10 5h9v9M19 5l4-4" fill="none" stroke="#6a86c0"/><use href="#wrench" y="4" width="20" height="20"/></svg><span>编辑抑制状态</span></button>
		<button class="tool"><svg class="ico" viewBox="0 0 24 24"><path d="M11 2h6v6h-6zM11 8h6v6h-6zM17 8h6v5h-6z" fill="#fbf08a" stroke="#333" stroke-width="1.200"/><use href="#wrench" y="4" width="20" height="20"/></svg><span>编辑布置</span></button>
		<span class="sep"></span>
		<button class="tool"><svg class="ico" viewBox="0 0 24 24"><use href="#cube-y" x="1" y="0" width="11" height="11"/><use href="#cube-y" x="1" y="12" width="11" height="11"/><use href="#cube-y" x="13" y="12" width="11" height="11"/></svg><span>爆炸视图</span></button>
		<button class="tool"><svg class="ico" viewBox="0 0 24 24"><path d="M12 2h7v6h-7z" fill="#fff" stroke="#667"/><path d="M8 9h6v6H8z" fill="#e6ecf8" stroke="#667"/><path d="M3 16h7v6H3z" fill="#fbe04a" stroke="#c8503a"/></svg><span>装配序列</span></button>
		<span class="sep"></span>
		<button class="tool"><svg class="ico" viewBox="0 0 24 24"><path d="M3 5h7v16H5l-3-3zM11 14h8v7h-8z" fill="#e8ecf0" stroke="#8a98a8"/><path d="M2 12h8M6 3v18" stroke="#8a98a8"/><use href="#cube-y" x="8" y="1" width="14" height="14"/></svg><span>转为工作部件</span></button>
		<button class="tool"><svg class="ico" viewBox="0 0 24 24"><path d="M1 9h6v12h10v2H5l-4-3z" fill="#dfe6ee" stroke="#8a98a8"/><path d="M4 2h18v16H4z" fill="#fff" stroke="#3a50c0" stroke-width="2"/><path d="M4 2h18v3H4z" fill="#3a50c0"/><use href="#cube-y" x="7" y="5" width="12" height="12"/></svg><span>转为显示部件</span></button>
		<span class="sep"></span>
		<button class="tool"><svg class="ico" viewBox="0 0 24 24"><path d="M0 3l4-2v4zM7 3l-3-2v4zM8 3l4-2v4zM14 3l-3-2v4z" fill="#d86a20"/><path d="M8 6h5v6H8zM2 12h6v6H2zM8 12h6v6H8z" fill="#fbe838" stroke="#a08a18"/><path d="M11 16l4 5 7-8" fill="none" stroke="#28a040" stroke-width="2.500"/></svg><span>间隙分析</span></button>
		<button class="more" aria-label="更多"><svg class="dn"><use href="#down"/></svg></button>
	</div>
	<div class="seg">
		<span class="grip"></span>
		<button class="tool"><svg class="ico" viewBox="0 0 24 24"><path d="M13 10l4-4h7v13l-4 4h-7z" fill="#3a62e0"/><path d="M13 10h7v13h-7z" fill="url(#gc)"/><path d="M3 4h9M3 21h9M6 4v17M1 9l5 6M1 15l5-6" stroke="#c82a30"/><path d="M10 7l9-7-3 5h4l-8 6 3-5z" fill="#fbe838" stroke="#665a10" stroke-width=".7"/></svg><span>自动判断的尺寸</span></button>
		<button class="drop" aria-label="尺寸选项"><svg class="dn"><use href="#down"/></svg></button>
		<button class="more" aria-label="更多"><svg class="dn"><use href="#down"/></svg></button>
	</div>
	<div class="seg">
		<span class="grip"></span>
		<button class="tool"><svg class="ico"><use href="#i-note"/></svg><span>注释编辑器</span></button>
		<button class="tool"><svg class="ico" viewBox="0 0 24 24"><use href="#slab"/><path d="M6 7l4 6 3-11h4M6 7h6" fill="none" stroke="#c83a44"/></svg><span>表面粗糙度符号</span></button>
		<button class="more" aria-label="更多"><svg class="dn"><use href="#down"/></svg></button>
	</div>
	<div class="seg">
		<span class="grip"></span>
		<button class="tool"><svg class="ico"><use href="#i-datum"/></svg><span>基准特征符号</span></button>
		<button class="tool"><svg class="ico"><use href="#i-target"/></svg><span>基准目标</span></button>
		<button class="tool"><svg class="ico"><use href="#i-frame"/></svg><span>特征控制框</span></button>
		<button class="more" aria-label="更多"><svg class="dn"><use href="#down"/></svg></button>
	</div>
	<div class="seg">
		<span class="grip"></span>
		<button class="tool"><svg class="ico" viewBox="0 0 24 24"><path d="M1 6h6v9l3 2v6H1z" fill="#fff" stroke="#999"/><path d="M9 6h13v17H12" fill="none" stroke="#c22" stroke-dasharray="2 1"/><path d="M16 0v24" stroke="#c22" stroke-dasharray="2 1"/><path d="M10 2l4-2v4zM22 2l-4-2v4zM13 1h6v2h-6z" fill="#d8652a"/></svg><span>编辑原点</span></button>
		<button class="more" aria-label="更多"><svg class="dn"><use href="#down"/></svg></button>
	</div>
</div>

<footer class="taskbar">
	<button class="start"><svg viewBox="0 0 20 20"><path d="M3 4c3-2 5-2 7-1L9 9C7 8 5 8 2 10z" fill="#e8502a"/><path d="M11 4c3 1 5 1 7 0l-2 6c-2 1-4 1-6 0z" fill="#7cc83a"/><path d="M2 11c3-1 5-1 7 0l-2 6c-2-1-4-1-6 0z" fill="#4a8cf0"/><path d="M10 11c2 1 4 1 6 0l-2 6c-2 1-4 1-6 0z" fill="#fbd03a"/></svg>开始</button>
	<button class="task"><svg viewBox="0 0 16 16"><path d="M1 13V3h5l2 2h6v3" fill="#f4cc5c" stroke="#a8801c"/><path d="M1 13l1-6h13v6z" fill="#fdeaa0" stroke="#a8801c"/></svg>Mechanical desig...</button>
	<button class="task active"><svg><use href="#nx"/></svg>NX 4 - Modeling ...</button>
	<svg class="lang" viewBox="0 0 40 16"><path d="M1 3l9 8M3 1l8 8" stroke="#222" stroke-width="1.500"/><path d="M21 1h12v12H21z" fill="#fff" stroke="#223"/><path d="M24 5c0-3 6-3 6 0 0 2-3 2-3 4M27 11v1" fill="none" stroke="#223" stroke-width="1.500"/></svg>
	<div class="tray"><svg viewBox="0 0 54 16"><circle cx="2" cy="7" r="5" fill="#2a72d8" stroke="#bfe0ff"/><path d="M12 3l6-2 4 6-6 6z" fill="#f0e060" stroke="#333"/><path d="M30 1h16v11H30z" fill="#f4f4f4" stroke="#333"/><path d="M33 9V4l3 4 3-4v5M41 4l3 5" fill="none" stroke="#333"/></svg><time>8:07</time></div>
	<div class="mark"><b>三维网</b>www.3dportal.cn</div>
</footer>
</body>
</html>
```
FILE: styles.css
```
*{
	box-sizing:border-box;
}
html,body{
	height:100%;
}
body{
	margin:0;
	display:flex;
	flex-direction:column;
	overflow:hidden;
	background:#ece9d8;
	color:#000;
	font:12px/12px "Noto Sans CJK SC","Liberation Sans",sans-serif;
}
button{
	margin:0;
	padding:0;
	border:0;
	background:none;
	color:inherit;
	font:inherit;
}
small{
	font:10px/12px "Liberation Mono",monospace;
}
p,h1,ul{
	margin:0;
	padding:0;
}
.defs{
	position:absolute;
}
.ico16{
	width:18px;
	height:18px;
	flex:none;
}
.ico{
	width:24px;
	height:24px;
	flex:none;
}
.big-a{
	font:bold 27px/24px "Liberation Serif",serif;
}
.dn{
	width:5px;
	height:3px;
	flex:none;
}

/* title */
.titlebar{
	flex:none;
	display:flex;
	align-items:center;
	height:26px;
	padding:0 2px;
	background:linear-gradient(#3a93ff 0,#0a5cf0 4px,#0055e5 10px,#0062ff 20px,#0058ea 24px,#0038b8 26px);
	color:#fff;
}
.titlebar h1{
	flex:1;
	padding-left:2px;
	font:bold 13px/20px "Liberation Mono","Noto Sans CJK SC",monospace;
	text-shadow:1px 1px #0a2a80;
	white-space:pre;
}
.titlebar h1 span{
	font-size:15px;
}
.winbtns{
	display:flex;
	gap:2px;
}
.winbtns button{
	width:21px;
	height:21px;
	border:1px solid #fff;
	border-radius:3px;
	background:linear-gradient(135deg,#7ba2f4,#2a5fe4 50%,#1f4fd0);
}
.winbtns .close{
	background:linear-gradient(135deg,#f0a088,#e0502a 50%,#c83c18);
}
.winbtns svg{
	display:block;
	width:19px;
	height:19px;
}

/* menu */
.menubar{
	flex:none;
	display:flex;
	align-items:center;
	height:24px;
	padding:0 5px 0 0;
	border-bottom:1px solid #d2cfbd;
	background:linear-gradient(90deg,#f6f6f4,#ece9d8);
}
.menubar .grip{
	height:14px;
	margin:0 1px 0 3px;
}
.menubar ul{
	flex:1;
	display:flex;
	gap:1px;
	list-style:none;
}
.menubar li{
	position:relative;
}
.menubar li>button{
	height:20px;
	padding:0 6px;
	display:flex;
	align-items:center;
	white-space:nowrap;
}
.menubar li>.open{
	border:1px solid #8f8d80;
	border-radius:3px 3px 0 0;
	padding:0 5px;
	background:#e3e0d2;
}
.mdibtns{
	display:flex;
	gap:3px;
}
.mdibtns button{
	width:14px;
	height:12px;
	background:#f8f7f2;
}
.mdibtns svg{
	display:block;
	width:14px;
	height:12px;
}
.menu{
	position:absolute;
	z-index:10;
	left:0;
	top:20px;
	width:162px;
	padding:2px;
	border:1px solid #8f8d80;
	background:#fff;
	box-shadow:2px 2px 2px #0008;
}
.menu button{
	width:100%;
	height:22px;
	display:flex;
	align-items:center;
	text-align:left;
}
.menu i{
	width:22px;
	height:16px;
	margin:0 1px 0 3px;
}
.menu i svg{
	display:block;
	width:16px;
	height:16px;
}
.menu hr{
	margin:4px 10px 4px 12px;
	border:0;
	border-top:1px solid #aca899;
}
.menu .sub{
	width:4px;
	height:8px;
	margin:0 4px 0 auto;
}
.menu .on{
	background:#316ac5;
	color:#fff;
}

/* tool bars */
.bar{
	flex:none;
	display:flex;
	height:63px;
	border-top:1px solid #fff;
	border-bottom:1px solid #8f8d80;
	background:linear-gradient(90deg,#f4f4f1,#edebdd 50%,#ebe8d6);
}
.bar.small{
	height:34px;
	border-bottom-color:#d2cfbd;
}
.bar.bottom{
	border-top:2px solid #fff;
	border-bottom-color:#b8b5a4;
}
.seg{
	display:flex;
	border-left:1px solid #fff;
	border-right:1px solid #c6c3b2;
	background:linear-gradient(#fff4,#d8d4b822);
}
.seg:first-child{
	border-left:0;
}
.seg.first{
	margin-left:17px;
}
.seg.last{
	border-right:0;
}
.grip{
	flex:none;
	width:2px;
	margin:5px 1px 5px 3px;
	background:repeating-linear-gradient(#9a9788 0,#9a9788 2px,transparent 2px,transparent 5px);
}
.sep{
	flex:none;
	width:6px;
	margin:3px 0;
	background:linear-gradient(#c0bdac,#c0bdac) 3px 0/1px 100% no-repeat;
}
.gap{
	width:155px;
}
.gap.hid{
	width:132px;
}
.gap.end{
	width:30px;
}
.tb{
	width:31px;
	display:grid;
	place-items:center;
}
.tb.on{
	margin:1px 0;
	border:1px solid #5c5444;
	border-radius:3px;
	background:#fcc99a;
}
.start-app{
	width:67px;
	padding-left:3px;
	display:flex;
	align-items:center;
	gap:4px;
}
.tool{
	width:60px;
	padding-top:4px;
	display:flex;
	flex-direction:column;
	align-items:center;
	gap:3px;
}
.tool span{
	width:48px;
	text-align:center;
}
.tool:disabled{
	color:#aca899;
}
.drop{
	width:12px;
	display:grid;
	place-items:center;
}
.more{
	width:14px;
	padding:3px 0 8px;
	display:flex;
	flex-direction:column;
	align-items:center;
}
.more .dn{
	margin-top:auto;
}
.more b{
	font:bold 16px/10px "Liberation Sans",sans-serif;
}

/* prompt line */
.cue{
	flex:none;
	display:flex;
	height:22px;
	padding:1px 2px 3px 3px;
	border-bottom:1px solid #77756a;
	background:linear-gradient(90deg,#f0eee2,#ebe8d7 30%);
}
.cue p{
	flex:1;
	border-right:1px solid #c0bdac;
	font:bold 13px/15px "Noto Sans CJK SC",sans-serif;
}
.cue p span{
	font:bold 12px/15px "Liberation Mono",monospace;
}
.cue .tiny{
	flex:0 0 20px;
}
.cue .tiny2{
	flex:0 0 36px;
}

main{
	flex:1;
	min-height:0;
	display:flex;
}
.snap{
	width:36px;
	border-right:2px solid #8a8878;
	background:linear-gradient(90deg,#f6f5ee,#ece9d8);
}
.group{
	width:33px;
	height:97px;
	padding:2px 5px 0;
	border-bottom:1px solid #c6c3b2;
	display:flex;
	flex-direction:column;
}
.group.points{
	height:239px;
}
.hgrip{
	height:2px;
	margin:1px 1px 6px;
	background:repeating-linear-gradient(90deg,#9a9788 0,#9a9788 2px,transparent 2px,transparent 5px);
}
.group button,.group button svg{
	display:block;
	width:24px;
	height:24px;
}
.group .filter{
	border:1px solid #d03a50;
}
.group .filter svg{
	width:22px;
	height:22px;
}
.group hr{
	width:28px;
	margin:5px 0 6px;
	border:0;
	border-top:1px solid #c6c3b2;
}
.lf{
	width:3px;
	height:6px;
	margin-top:6px;
}
.lf.mid{
	margin-left:10px;
	margin-top:2px;
}
.points button{
	margin-bottom:7px;
	padding:2px 0;
}
.points button svg{
	width:24px;
	height:22px;
	fill:none;
	stroke:#9c948c;
	stroke-width:1.500;
}
.points .lf{
	margin-top:0;
}
.points .dot{
	fill:#9a8886;
	stroke:none;
}

.view{
	position:relative;
	flex:1;
	background:linear-gradient(#9abfde,#b6cfe1 35%,#c8d7e2 50%,#e0e3e6 70%,#e6e6e6 80%);
}
.scene{
	display:block;
	width:100%;
	height:100%;
}
.scene text{
	font:13px "Liberation Sans",sans-serif;
	fill:#d4d4d4;
}
.palette{
	position:absolute;
	left:519px;
	top:199px;
	width:68px;
	padding:3px;
	border:1px solid #fff;
	border-right-color:#77756a;
	border-bottom-color:#77756a;
	background:linear-gradient(90deg,#f6f5ee,#ece9d8);
}
.palette .tool{
	display:flex;
	width:100%;
	height:58px;
	padding:2px 2px 0 0;
	gap:4px;
}
.palette hr{
	margin:2px 3px 3px;
	border:0;
	border-top:1px solid #c0bdac;
}
.ptitle{
	height:18px;
	margin-bottom:4px;
	padding:0 1px 0 2px;
	display:flex;
	align-items:center;
	justify-content:space-between;
	background:#0a54d8;
	color:#fff;
	font:bold 11px/18px "Liberation Mono",monospace;
}
.ptitle .dn{
	width:8px;
	height:4px;
	fill:#fff;
}
.ptitle button{
	width:16px;
	height:16px;
	border:1px solid #77756a;
	background:#ece9d8;
}
.ptitle button svg{
	display:block;
}
.abc{
	font:bold 7px "Liberation Sans",sans-serif;
}

.resource{
	width:44px;
	padding:14px 6px 0 0;
	display:flex;
	flex-direction:column;
	gap:12px;
	background:linear-gradient(90deg,#fff 0,#ece9d8 2px,#ece9d8 9px,#77756a 9px,#77756a 10px,#aca899 10px);
}
.resource div{
	padding-left:11px;
}
.resource button{
	display:grid;
	place-items:center;
	width:27px;
	height:42px;
	border-bottom:1px solid #c6c3b2;
	background:linear-gradient(90deg,#f8f7f2,#ece9d8);
}
.resource svg{
	width:24px;
	height:24px;
}

/* taskbar */
.taskbar{
	flex:none;
	position:relative;
	display:flex;
	height:30px;
	background:linear-gradient(#3a80e8 0,#2560dc 4px,#245edb 22px,#1a4ab8 30px);
	color:#fff;
}
.start{
	width:97px;
	margin-right:9px;
	padding-left:8px;
	display:flex;
	align-items:center;
	gap:6px;
	border-radius:0 10px 10px 0;
	background:linear-gradient(#2f7a30 0,#5cb85c 3px,#3a983a 10px,#379537 22px,#256e26);
	box-shadow:inset -3px 0 4px #1c5a1c;
	font:italic 19px/24px "Noto Sans CJK SC",sans-serif;
	text-shadow:1px 1px 1px #143c14;
}
.start svg{
	width:22px;
	height:22px;
}
.task{
	width:159px;
	height:25px;
	margin:3px 1px 0 0;
	padding-left:8px;
	display:flex;
	align-items:center;
	gap:5px;
	border-radius:2px;
	background:#3c81f3;
	font:10px/16px "Liberation Mono",monospace;
}
.task svg{
	width:16px;
	height:16px;
}
.task.active{
	padding-left:11px;
	background:#1c50b8;
}
.lang{
	width:40px;
	height:16px;
	margin:7px 12px 0 auto;
}
.tray{
	width:94px;
	display:flex;
	align-items:center;
	border-left:1px solid #0a4a9c;
	background:linear-gradient(#3ab0f8 0,#1290e8 4px,#1290e8 24px,#0e72c8);
}
.tray svg{
	width:54px;
	height:16px;
	overflow:visible;
}
.tray time{
	font:10px/16px "Liberation Mono",monospace;
}
/* site mark lies over the tray */
.mark{
	position:absolute;
	right:19px;
	top:7px;
	color:#fff;
	font:20px/22px "Liberation Sans","Noto Sans CJK SC",sans-serif;
	-webkit-text-stroke:2px #e8363e;
	paint-order:stroke fill;
}
.mark b{
	font-size:18px;
}
```
